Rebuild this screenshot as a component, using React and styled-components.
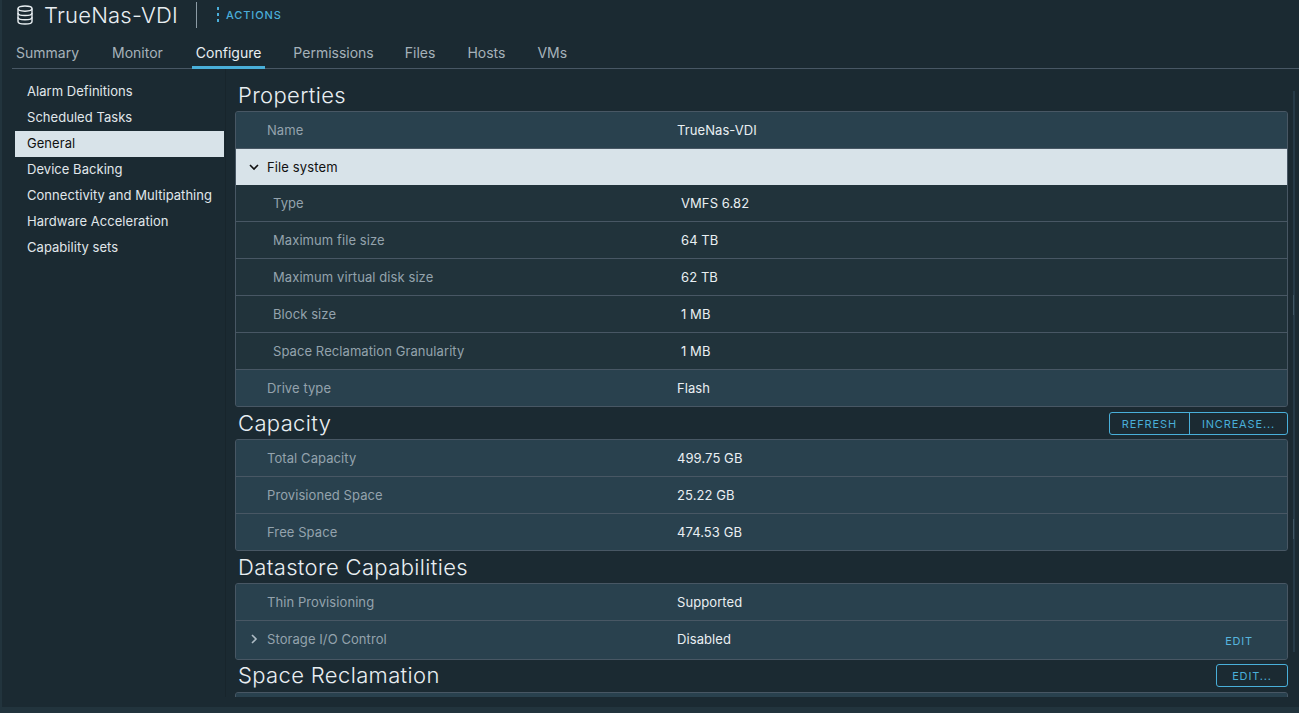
import React from "react";
import styled, { createGlobalStyle } from "styled-components";

const GlobalStyle = createGlobalStyle`
  html, body {
    margin: 0;
    height: 100%;
    overflow: hidden;
    background: #1b2a32;
  }
  * { box-sizing: border-box; }
`;

const tabs = ["Summary", "Monitor", "Configure", "Permissions", "Files", "Hosts", "VMs"];
const navItems = [
  "Alarm Definitions",
  "Scheduled Tasks",
  "General",
  "Device Backing",
  "Connectivity and Multipathing",
  "Hardware Acceleration",
  "Capability sets",
];
const fileSystemRows = [
  ["Type", "VMFS 6.82"],
  ["Maximum file size", "64 TB"],
  ["Maximum virtual disk size", "62 TB"],
  ["Block size", "1 MB"],
  ["Space Reclamation Granularity", "1 MB"],
];
const capacityRows = [
  ["Total Capacity", "499.75 GB"],
  ["Provisioned Space", "25.22 GB"],
  ["Free Space", "474.53 GB"],
];

const DatabaseIcon = () => (
  <svg width="18" height="20" viewBox="0 0 18 20" fill="none" stroke="#e9eff2" strokeWidth="1.4">
    <ellipse cx="9" cy="3.6" rx="7" ry="2.6" />
    <path d="M2 3.6V16.4C2 17.9 5.1 19 9 19s7-1.100 7-2.600V3.600" />
    <path d="M2 7.900C2 9.400 5.100 10.500 9 10.500s7-1.100 7-2.600" />
    <path d="M2 12.200C2 13.700 5.100 14.800 9 14.800s7-1.100 7-2.600" />
  </svg>
);

const Chevron = ({ open, color }) => (
  <svg width="10" height="10" viewBox="0 0 10 10" fill="none" stroke={color} strokeWidth="1.600">
    <path d={open ? "M1 3l4 4 4-4" : "M3 1l4 4-4 4"} />
  </svg>
);

const Row = ({ label, value, indent, alt, tall, action, chevron }) => (
  <RowWrap $alt={alt} $tall={tall}>
    <ChevronCell $indent={indent}>{chevron}</ChevronCell>
    <Label>{label}</Label>
    <Value $indent={indent}>{value}</Value>
    {action && <RowAction>{action}</RowAction>}
  </RowWrap>
);

export default function App() {
  return (
    <Page>
      <GlobalStyle />
      <Header>
        <DatabaseIcon />
        <Title>TrueNas-VDI</Title>
        <HeaderDivider />
        <Actions>
          <Dots>
            <i />
            <i />
            <i />
          </Dots>
          ACTIONS
        </Actions>
      </Header>
      <TabBar>
        {tabs.map((t) => (
          <Tab key={t} $active={t === "Configure"}>
            {t}
          </Tab>
        ))}
      </TabBar>
      <Body>
        <Sidebar>
          {navItems.map((n) => (
            <NavItem key={n} $active={n === "General"}>
              {n}
            </NavItem>
          ))}
        </Sidebar>
        <Content>
          <SectionHead>
            <SectionTitle>Properties</SectionTitle>
          </SectionHead>
          <Panel>
            <Row label="Name" value="TrueNas-VDI" />
            <GroupRow>
              <ChevronCell>
                <Chevron open color="#111" />
              </ChevronCell>
              File system
            </GroupRow>
            {fileSystemRows.map(([l, v]) => (
              <Row key={l} label={l} value={v} indent alt />
            ))}
            <Row label="Drive type" value="Flash" />
          </Panel>
          <SectionHead>
            <SectionTitle>Capacity</SectionTitle>
            <ButtonGroup>
              <OutlineButton>REFRESH</OutlineButton>
              <OutlineButton>INCREASE...</OutlineButton>
            </ButtonGroup>
          </SectionHead>
          <Panel>
            {capacityRows.map(([l, v]) => (
              <Row key={l} label={l} value={v} />
            ))}
          </Panel>
          <SectionHead>
            <SectionTitle>Datastore Capabilities</SectionTitle>
          </SectionHead>
          <Panel>
            <Row label="Thin Provisioning" value="Supported" />
            <Row
              label="Storage I/O Control"
              value="Disabled"
              action="EDIT"
              tall
              chevron={<Chevron color="#adbbc4" />}
            />
          </Panel>
          <SectionHead $tight>
            <SectionTitle>Space Reclamation</SectionTitle>
            <ButtonGroup>
              <OutlineButton $wide>EDIT...</OutlineButton>
            </ButtonGroup>
          </SectionHead>
          <Panel>
            <Row />
          </Panel>
        </Content>
        <Scrollbar>
          <ScrollMark $top={204} />
          <ScrollMark $top={428} />
        </Scrollbar>
      </Body>
      <BottomStrip />
    </Page>
  );
}

const Page = styled.div`
  position: relative;
  width: 1299px;
  height: 713px;
  overflow: hidden;
  display: flex;
  flex-direction: column;
  background: #1b2a32;
  border-left: 2px solid #22343d;
  font-family: "Inter", "Liberation Sans", sans-serif;
`;
const Header = styled.div`
  height: 29px;
  display: flex;
  align-items: center;
  padding-left: 14px;
  flex-shrink: 0;
`;
const Title = styled.div`
  margin-left: 10px;
  font-size: 22px;
  letter-spacing: 0.2px;
  font-weight: 300;
  color: #e9eff2;
`;
const HeaderDivider = styled.div`
  width: 1px;
  height: 26px;
  margin-left: 18px;
  background: #8c9ba5;
`;
const Actions = styled.div`
  display: flex;
  align-items: center;
  margin: 1px 0 0 20px;
  font-size: 11px;
  font-weight: 500;
  letter-spacing: 0.9px;
  color: #4aaed9;
`;
const Dots = styled.span`
  display: flex;
  flex-direction: column;
  gap: 3px;
  margin: -1px 7px 0 0;
  i {
    width: 2px;
    height: 3px;
    background: #4aaed9;
  }
`;
const TabBar = styled.div`
  height: 40px;
  margin-left: 10px;
  display: flex;
  gap: 24px;
  flex-shrink: 0;
  border-bottom: 1px solid #485764;
`;
const Tab = styled.div`
  height: 40px;
  padding: 15px 4px 0;
  font-size: 14px;
  color: ${(p) => (p.$active ? "#e9eff2" : "#a6b2ba")};
  border-bottom: 3px solid ${(p) => (p.$active ? "#49afd9" : "transparent")};
  &:nth-child(-n + 2) {
    margin-right: 1px;
  }
  &:nth-child(4) {
    margin-right: -1px;
  }
`;
const Body = styled.div`
  flex: 1;
  min-height: 0;
  display: flex;
  align-items: flex-start;
`;
const Sidebar = styled.div`
  width: 211px;
  height: 628px;
  padding: 10px 1px 0 0;
  margin-left: 13px;
  flex-shrink: 0;
  border-right: 1px solid #18252c;
`;
const NavItem = styled.div`
  height: 26px;
  line-height: 25px;
  padding-left: 12px;
  font-size: 13px;
  letter-spacing: 0.04px;
  white-space: nowrap;
  color: ${(p) => (p.$active ? "#111" : "#e0e7eb")};
  background: ${(p) => (p.$active ? "#d8e3e9" : "transparent")};
`;
const Content = styled.div`
  width: 1053px;
  height: 628px;
  margin-left: 9px;
  overflow: hidden;
  flex-shrink: 0;
`;
const SectionHead = styled.div`
  height: 32px;
  display: flex;
  align-items: flex-start;
  justify-content: space-between;
  padding: ${(p) => (p.$tight ? "0" : "1px")} 0 0 3px;
  &:first-child {
    margin-top: 10px;
  }
`;
const SectionTitle = styled.h2`
  margin: 0;
  font-size: 22px;
  line-height: 30px;
  letter-spacing: 0.36px;
  font-weight: 300;
  color: #e9eff2;
  white-space: nowrap;
`;
const ButtonGroup = styled.div`
  display: flex;
  height: 23px;
  margin-top: 4px;
  border: 1px solid #49afd9;
  border-radius: 3px;
`;
const OutlineButton = styled.div`
  min-width: ${(p) => (p.$wide ? "70px" : "0")};
  padding: 0 12px;
  display: flex;
  align-items: center;
  justify-content: center;
  font-size: 11px;
  letter-spacing: 0.85px;
  color: #49afd9;
  & + & {
    border-left: 1px solid #49afd9;
  }
`;
const Panel = styled.div`
  border: 1px solid #485764;
  border-radius: 3px;
  overflow: hidden;
  background: #29414e;
`;
const RowWrap = styled.div`
  position: relative;
  height: ${(p) => (p.$tall ? "39px" : "37px")};
  padding-bottom: ${(p) => (p.$tall ? "2px" : "0")};
  display: flex;
  align-items: center;
  font-size: 13px;
  letter-spacing: 0.08px;
  background: ${(p) => (p.$alt ? "#21333b" : "#29414e")};
  border-top: 1px solid #485764;
  &:first-child {
    border-top: 0;
    height: 36px;
  }
`;
const ChevronCell = styled.div`
  width: ${(p) => (p.$indent ? "37px" : "31px")};
  padding-left: 13px;
  display: flex;
  align-items: center;
  flex-shrink: 0;
`;
const Label = styled.div`
  width: 410px;
  color: #94a3ad;
`;
const Value = styled.div`
  margin-left: ${(p) => (p.$indent ? "-2px" : "0")};
  color: #e9eff2;
`;
const RowAction = styled.div`
  position: absolute;
  right: 34px;
  margin-top: 3px;
  font-size: 11px;
  letter-spacing: 0.8px;
  color: #57b5de;
`;
const GroupRow = styled.div`
  height: 37px;
  display: flex;
  align-items: center;
  font-size: 13px;
  letter-spacing: 0.12px;
  color: #111;
  background: #d8e3e9;
  border-top: 1px solid #485764;
  & + ${RowWrap} {
    height: 36px;
    border-top: 0;
  }
`;
const Scrollbar = styled.div`
  position: relative;
  width: 2px;
  height: 561px;
  margin: 22px 0 0 5px;
  flex-shrink: 0;
  background: #263a47;
`;
const ScrollMark = styled.div`
  position: absolute;
  left: 0;
  top: ${(p) => p.$top}px;
  width: 1px;
  height: 20px;
  background: #3f5563;
`;
const BottomStrip = styled.div`
  height: 6px;
  flex-shrink: 0;
  background: #22343d;
`;
